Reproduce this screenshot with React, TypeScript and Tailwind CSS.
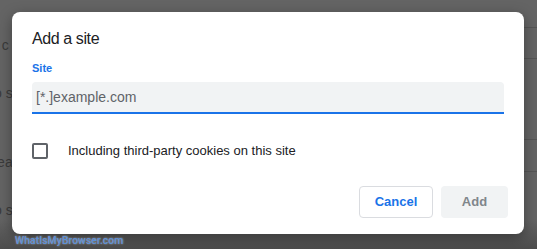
import { useState } from 'react';

const backdropRows = [
  { text: 't c', top: 'mt-[36px]' },
  { text: 'o s', top: 'mt-[30px]' },
  { text: 'lea', top: 'mt-[51px]' },
  { text: 'o s', top: 'mt-[30px]' },
];

export default function App() {
  const [site, setSite] = useState('');
  const [thirdParty, setThirdParty] = useState(false);

  return (
    <div
      className="relative w-[537px] h-[249px] overflow-hidden bg-[#646464]"
      style={{ fontFamily: '"Liberation Sans", Arial, sans-serif' }}
    >
      {/* page behind the scrim */}
      <div className="flex flex-col text-[14px] text-[#2a2a2a] leading-[18px]">
        {backdropRows.map((r, i) => (
          <div key={i} className={`${r.top} -ml-[6px] opacity-70`}>
            {r.text}
          </div>
        ))}
      </div>
      <div className="absolute right-0 top-0 w-[14px] h-full flex flex-col">
        <div className="mt-[27px] h-px bg-[#555]" />
        <div className="mt-[30px] h-px bg-[#555]" />
        <div className="mt-[80px] h-px bg-[#555]" />
        <div className="mt-[31px] h-px bg-[#555]" />
      </div>
      <div className="absolute inset-x-0 bottom-0 h-[30px] bg-gradient-to-b from-transparent to-[#4c4c4c]" />

      {/* dialog */}
      <div className="absolute left-[12px] top-[12px] w-[512px] h-[222px] rounded-[8px] bg-white shadow-[0_4px_14px_rgba(0,0,0,0.35)] flex flex-col pl-[20px] pr-[16px] pt-[16px] pb-[16px]">
        <div className="text-[16px] leading-[22px] tracking-[-0.4px] text-[#202124]">Add a site</div>

        <label className="mt-[11px] text-[11px] leading-[14px] font-bold text-[#1a73e8]">Site</label>
        <div className="mt-[7px] mr-[4px] h-[32px] rounded-t-[4px] bg-[#f1f3f4] border-b-2 border-[#1a73e8] flex items-center px-[4px]">
          <input
            value={site}
            onChange={(e) => setSite(e.target.value)}
            placeholder="[*.]example.com"
            className="w-full bg-transparent outline-none text-[14px] text-[#202124] placeholder:text-[#5f6368]"
          />
        </div>

        <label className="mt-[29px] flex items-center h-[16px] cursor-pointer">
          <span
            onClick={() => setThirdParty(!thirdParty)}
            className="w-[16px] h-[16px] rounded-[2px] border-2 border-[#5f6368] shrink-0"
          />
          <span className="ml-[20px] text-[13px] text-[#202124]">
            Including third-party cookies on this site
          </span>
        </label>

        <div className="mt-auto flex justify-end gap-[8px]">
          <button className="w-[74px] h-[32px] rounded-[4px] border border-[#dadce0] bg-white text-[13px] font-bold text-[#1a73e8]">
            Cancel
          </button>
          <button className="w-[67px] h-[32px] rounded-[4px] bg-[#f1f3f4] text-[13px] font-bold text-[#80868b]">
            Add
          </button>
        </div>
      </div>

      {/* watermark */}
      <div
        className="absolute left-[15px] bottom-[1px] text-[10.5px] leading-[14px] font-medium text-[#5b8fd6] [text-shadow:0_0_2px_rgba(255,255,255,0.6)]"
        style={{ fontFamily: 'Roboto, "Liberation Sans", sans-serif' }}
      >
        WhatIsMyBrowser.com
      </div>
    </div>
  );
}
